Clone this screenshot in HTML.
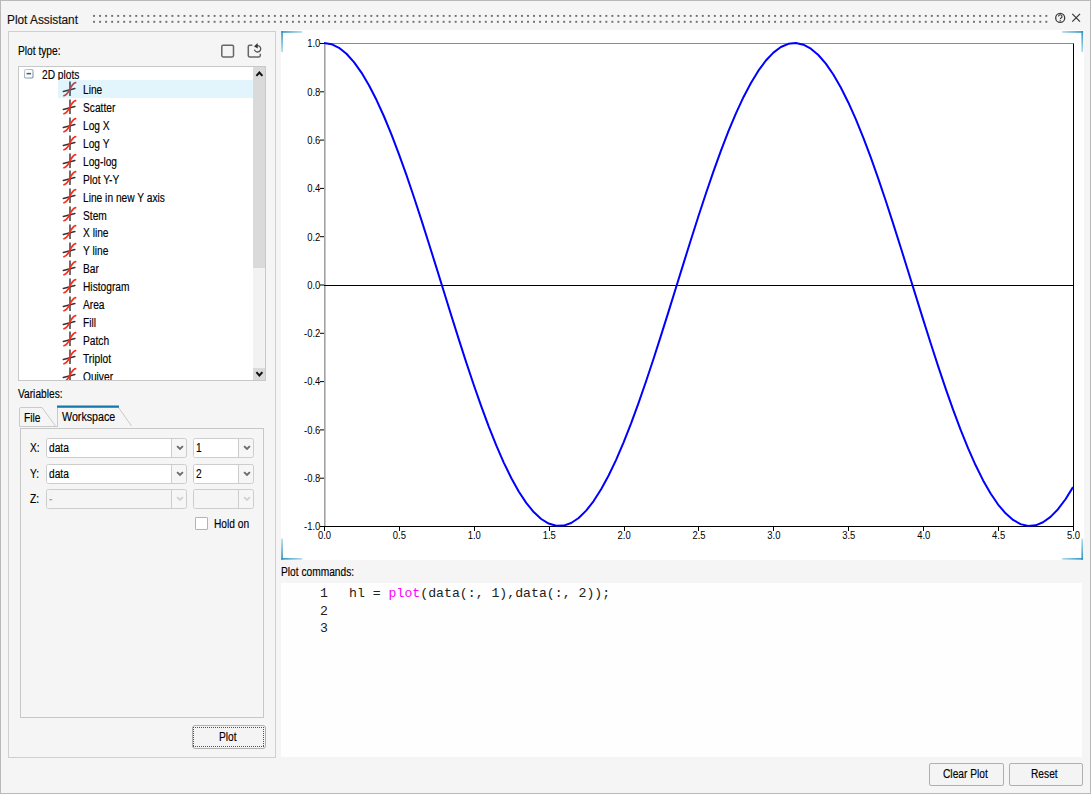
<!DOCTYPE html>
<html><head><meta charset="utf-8"><style>
*{margin:0;padding:0;box-sizing:border-box}
html,body{width:1091px;height:794px;overflow:hidden;background:#f5f5f5}
body{position:relative;font-family:"Liberation Sans",sans-serif;color:#000}
.abs{position:absolute}
.t{position:absolute;white-space:nowrap;line-height:1;transform-origin:0 0;-webkit-text-stroke:0.15px currentColor}
</style></head><body>

<div class="abs" style="left:0;top:0;width:1091px;height:794px;border:1px solid #b9b9b9"></div>
<div class="t" style="left:7px;top:14.04px;font-size:12px;color:#111;transform:scaleX(0.985);">Plot Assistant</div>
<svg class="abs" style="left:0;top:0" width="1091" height="40">
<g fill="#6e6e6e"><rect x="93.10" y="14.95" width="1.9" height="1.9"/><rect x="93.10" y="20.85" width="1.9" height="1.9"/><rect x="99.13" y="14.95" width="1.9" height="1.9"/><rect x="99.13" y="20.85" width="1.9" height="1.9"/><rect x="105.15" y="14.95" width="1.9" height="1.9"/><rect x="105.15" y="20.85" width="1.9" height="1.9"/><rect x="111.18" y="14.95" width="1.9" height="1.9"/><rect x="111.18" y="20.85" width="1.9" height="1.9"/><rect x="117.21" y="14.95" width="1.9" height="1.9"/><rect x="117.21" y="20.85" width="1.9" height="1.9"/><rect x="123.23" y="14.95" width="1.9" height="1.9"/><rect x="123.23" y="20.85" width="1.9" height="1.9"/><rect x="129.26" y="14.95" width="1.9" height="1.9"/><rect x="129.26" y="20.85" width="1.9" height="1.9"/><rect x="135.29" y="14.95" width="1.9" height="1.9"/><rect x="135.29" y="20.85" width="1.9" height="1.9"/><rect x="141.32" y="14.95" width="1.9" height="1.9"/><rect x="141.32" y="20.85" width="1.9" height="1.9"/><rect x="147.34" y="14.95" width="1.9" height="1.9"/><rect x="147.34" y="20.85" width="1.9" height="1.9"/><rect x="153.37" y="14.95" width="1.9" height="1.9"/><rect x="153.37" y="20.85" width="1.9" height="1.9"/><rect x="159.40" y="14.95" width="1.9" height="1.9"/><rect x="159.40" y="20.85" width="1.9" height="1.9"/><rect x="165.42" y="14.95" width="1.9" height="1.9"/><rect x="165.42" y="20.85" width="1.9" height="1.9"/><rect x="171.45" y="14.95" width="1.9" height="1.9"/><rect x="171.45" y="20.85" width="1.9" height="1.9"/><rect x="177.48" y="14.95" width="1.9" height="1.9"/><rect x="177.48" y="20.85" width="1.9" height="1.9"/><rect x="183.50" y="14.95" width="1.9" height="1.9"/><rect x="183.50" y="20.85" width="1.9" height="1.9"/><rect x="189.53" y="14.95" width="1.9" height="1.9"/><rect x="189.53" y="20.85" width="1.9" height="1.9"/><rect x="195.56" y="14.95" width="1.9" height="1.9"/><rect x="195.56" y="20.85" width="1.9" height="1.9"/><rect x="201.59" y="14.95" width="1.9" height="1.9"/><rect x="201.59" y="20.85" width="1.9" height="1.9"/><rect x="207.61" y="14.95" width="1.9" height="1.9"/><rect x="207.61" y="20.85" width="1.9" height="1.9"/><rect x="213.64" y="14.95" width="1.9" height="1.9"/><rect x="213.64" y="20.85" width="1.9" height="1.9"/><rect x="219.67" y="14.95" width="1.9" height="1.9"/><rect x="219.67" y="20.85" width="1.9" height="1.9"/><rect x="225.69" y="14.95" width="1.9" height="1.9"/><rect x="225.69" y="20.85" width="1.9" height="1.9"/><rect x="231.72" y="14.95" width="1.9" height="1.9"/><rect x="231.72" y="20.85" width="1.9" height="1.9"/><rect x="237.75" y="14.95" width="1.9" height="1.9"/><rect x="237.75" y="20.85" width="1.9" height="1.9"/><rect x="243.78" y="14.95" width="1.9" height="1.9"/><rect x="243.78" y="20.85" width="1.9" height="1.9"/><rect x="249.80" y="14.95" width="1.9" height="1.9"/><rect x="249.80" y="20.85" width="1.9" height="1.9"/><rect x="255.83" y="14.95" width="1.9" height="1.9"/><rect x="255.83" y="20.85" width="1.9" height="1.9"/><rect x="261.86" y="14.95" width="1.9" height="1.9"/><rect x="261.86" y="20.85" width="1.9" height="1.9"/><rect x="267.88" y="14.95" width="1.9" height="1.9"/><rect x="267.88" y="20.85" width="1.9" height="1.9"/><rect x="273.91" y="14.95" width="1.9" height="1.9"/><rect x="273.91" y="20.85" width="1.9" height="1.9"/><rect x="279.94" y="14.95" width="1.9" height="1.9"/><rect x="279.94" y="20.85" width="1.9" height="1.9"/><rect x="285.96" y="14.95" width="1.9" height="1.9"/><rect x="285.96" y="20.85" width="1.9" height="1.9"/><rect x="291.99" y="14.95" width="1.9" height="1.9"/><rect x="291.99" y="20.85" width="1.9" height="1.9"/><rect x="298.02" y="14.95" width="1.9" height="1.9"/><rect x="298.02" y="20.85" width="1.9" height="1.9"/><rect x="304.05" y="14.95" width="1.9" height="1.9"/><rect x="304.05" y="20.85" width="1.9" height="1.9"/><rect x="310.07" y="14.95" width="1.9" height="1.9"/><rect x="310.07" y="20.85" width="1.9" height="1.9"/><rect x="316.10" y="14.95" width="1.9" height="1.9"/><rect x="316.10" y="20.85" width="1.9" height="1.9"/><rect x="322.13" y="14.95" width="1.9" height="1.9"/><rect x="322.13" y="20.85" width="1.9" height="1.9"/><rect x="328.15" y="14.95" width="1.9" height="1.9"/><rect x="328.15" y="20.85" width="1.9" height="1.9"/><rect x="334.18" y="14.95" width="1.9" height="1.9"/><rect x="334.18" y="20.85" width="1.9" height="1.9"/><rect x="340.21" y="14.95" width="1.9" height="1.9"/><rect x="340.21" y="20.85" width="1.9" height="1.9"/><rect x="346.23" y="14.95" width="1.9" height="1.9"/><rect x="346.23" y="20.85" width="1.9" height="1.9"/><rect x="352.26" y="14.95" width="1.9" height="1.9"/><rect x="352.26" y="20.85" width="1.9" height="1.9"/><rect x="358.29" y="14.95" width="1.9" height="1.9"/><rect x="358.29" y="20.85" width="1.9" height="1.9"/><rect x="364.32" y="14.95" width="1.9" height="1.9"/><rect x="364.32" y="20.85" width="1.9" height="1.9"/><rect x="370.34" y="14.95" width="1.9" height="1.9"/><rect x="370.34" y="20.85" width="1.9" height="1.9"/><rect x="376.37" y="14.95" width="1.9" height="1.9"/><rect x="376.37" y="20.85" width="1.9" height="1.9"/><rect x="382.40" y="14.95" width="1.9" height="1.9"/><rect x="382.40" y="20.85" width="1.9" height="1.9"/><rect x="388.42" y="14.95" width="1.9" height="1.9"/><rect x="388.42" y="20.85" width="1.9" height="1.9"/><rect x="394.45" y="14.95" width="1.9" height="1.9"/><rect x="394.45" y="20.85" width="1.9" height="1.9"/><rect x="400.48" y="14.95" width="1.9" height="1.9"/><rect x="400.48" y="20.85" width="1.9" height="1.9"/><rect x="406.50" y="14.95" width="1.9" height="1.9"/><rect x="406.50" y="20.85" width="1.9" height="1.9"/><rect x="412.53" y="14.95" width="1.9" height="1.9"/><rect x="412.53" y="20.85" width="1.9" height="1.9"/><rect x="418.56" y="14.95" width="1.9" height="1.9"/><rect x="418.56" y="20.85" width="1.9" height="1.9"/><rect x="424.59" y="14.95" width="1.9" height="1.9"/><rect x="424.59" y="20.85" width="1.9" height="1.9"/><rect x="430.61" y="14.95" width="1.9" height="1.9"/><rect x="430.61" y="20.85" width="1.9" height="1.9"/><rect x="436.64" y="14.95" width="1.9" height="1.9"/><rect x="436.64" y="20.85" width="1.9" height="1.9"/><rect x="442.67" y="14.95" width="1.9" height="1.9"/><rect x="442.67" y="20.85" width="1.9" height="1.9"/><rect x="448.69" y="14.95" width="1.9" height="1.9"/><rect x="448.69" y="20.85" width="1.9" height="1.9"/><rect x="454.72" y="14.95" width="1.9" height="1.9"/><rect x="454.72" y="20.85" width="1.9" height="1.9"/><rect x="460.75" y="14.95" width="1.9" height="1.9"/><rect x="460.75" y="20.85" width="1.9" height="1.9"/><rect x="466.77" y="14.95" width="1.9" height="1.9"/><rect x="466.77" y="20.85" width="1.9" height="1.9"/><rect x="472.80" y="14.95" width="1.9" height="1.9"/><rect x="472.80" y="20.85" width="1.9" height="1.9"/><rect x="478.83" y="14.95" width="1.9" height="1.9"/><rect x="478.83" y="20.85" width="1.9" height="1.9"/><rect x="484.86" y="14.95" width="1.9" height="1.9"/><rect x="484.86" y="20.85" width="1.9" height="1.9"/><rect x="490.88" y="14.95" width="1.9" height="1.9"/><rect x="490.88" y="20.85" width="1.9" height="1.9"/><rect x="496.91" y="14.95" width="1.9" height="1.9"/><rect x="496.91" y="20.85" width="1.9" height="1.9"/><rect x="502.94" y="14.95" width="1.9" height="1.9"/><rect x="502.94" y="20.85" width="1.9" height="1.9"/><rect x="508.96" y="14.95" width="1.9" height="1.9"/><rect x="508.96" y="20.85" width="1.9" height="1.9"/><rect x="514.99" y="14.95" width="1.9" height="1.9"/><rect x="514.99" y="20.85" width="1.9" height="1.9"/><rect x="521.02" y="14.95" width="1.9" height="1.9"/><rect x="521.02" y="20.85" width="1.9" height="1.9"/><rect x="527.04" y="14.95" width="1.9" height="1.9"/><rect x="527.04" y="20.85" width="1.9" height="1.9"/><rect x="533.07" y="14.95" width="1.9" height="1.9"/><rect x="533.07" y="20.85" width="1.9" height="1.9"/><rect x="539.10" y="14.95" width="1.9" height="1.9"/><rect x="539.10" y="20.85" width="1.9" height="1.9"/><rect x="545.12" y="14.95" width="1.9" height="1.9"/><rect x="545.12" y="20.85" width="1.9" height="1.9"/><rect x="551.15" y="14.95" width="1.9" height="1.9"/><rect x="551.15" y="20.85" width="1.9" height="1.9"/><rect x="557.18" y="14.95" width="1.9" height="1.9"/><rect x="557.18" y="20.85" width="1.9" height="1.9"/><rect x="563.21" y="14.95" width="1.9" height="1.9"/><rect x="563.21" y="20.85" width="1.9" height="1.9"/><rect x="569.23" y="14.95" width="1.9" height="1.9"/><rect x="569.23" y="20.85" width="1.9" height="1.9"/><rect x="575.26" y="14.95" width="1.9" height="1.9"/><rect x="575.26" y="20.85" width="1.9" height="1.9"/><rect x="581.29" y="14.95" width="1.9" height="1.9"/><rect x="581.29" y="20.85" width="1.9" height="1.9"/><rect x="587.31" y="14.95" width="1.9" height="1.9"/><rect x="587.31" y="20.85" width="1.9" height="1.9"/><rect x="593.34" y="14.95" width="1.9" height="1.9"/><rect x="593.34" y="20.85" width="1.9" height="1.9"/><rect x="599.37" y="14.95" width="1.9" height="1.9"/><rect x="599.37" y="20.85" width="1.9" height="1.9"/><rect x="605.39" y="14.95" width="1.9" height="1.9"/><rect x="605.39" y="20.85" width="1.9" height="1.9"/><rect x="611.42" y="14.95" width="1.9" height="1.9"/><rect x="611.42" y="20.85" width="1.9" height="1.9"/><rect x="617.45" y="14.95" width="1.9" height="1.9"/><rect x="617.45" y="20.85" width="1.9" height="1.9"/><rect x="623.48" y="14.95" width="1.9" height="1.9"/><rect x="623.48" y="20.85" width="1.9" height="1.9"/><rect x="629.50" y="14.95" width="1.9" height="1.9"/><rect x="629.50" y="20.85" width="1.9" height="1.9"/><rect x="635.53" y="14.95" width="1.9" height="1.9"/><rect x="635.53" y="20.85" width="1.9" height="1.9"/><rect x="641.56" y="14.95" width="1.9" height="1.9"/><rect x="641.56" y="20.85" width="1.9" height="1.9"/><rect x="647.58" y="14.95" width="1.9" height="1.9"/><rect x="647.58" y="20.85" width="1.9" height="1.9"/><rect x="653.61" y="14.95" width="1.9" height="1.9"/><rect x="653.61" y="20.85" width="1.9" height="1.9"/><rect x="659.64" y="14.95" width="1.9" height="1.9"/><rect x="659.64" y="20.85" width="1.9" height="1.9"/><rect x="665.66" y="14.95" width="1.9" height="1.9"/><rect x="665.66" y="20.85" width="1.9" height="1.9"/><rect x="671.69" y="14.95" width="1.9" height="1.9"/><rect x="671.69" y="20.85" width="1.9" height="1.9"/><rect x="677.72" y="14.95" width="1.9" height="1.9"/><rect x="677.72" y="20.85" width="1.9" height="1.9"/><rect x="683.75" y="14.95" width="1.9" height="1.9"/><rect x="683.75" y="20.85" width="1.9" height="1.9"/><rect x="689.77" y="14.95" width="1.9" height="1.9"/><rect x="689.77" y="20.85" width="1.9" height="1.9"/><rect x="695.80" y="14.95" width="1.9" height="1.9"/><rect x="695.80" y="20.85" width="1.9" height="1.9"/><rect x="701.83" y="14.95" width="1.9" height="1.9"/><rect x="701.83" y="20.85" width="1.9" height="1.9"/><rect x="707.85" y="14.95" width="1.9" height="1.9"/><rect x="707.85" y="20.85" width="1.9" height="1.9"/><rect x="713.88" y="14.95" width="1.9" height="1.9"/><rect x="713.88" y="20.85" width="1.9" height="1.9"/><rect x="719.91" y="14.95" width="1.9" height="1.9"/><rect x="719.91" y="20.85" width="1.9" height="1.9"/><rect x="725.93" y="14.95" width="1.9" height="1.9"/><rect x="725.93" y="20.85" width="1.9" height="1.9"/><rect x="731.96" y="14.95" width="1.9" height="1.9"/><rect x="731.96" y="20.85" width="1.9" height="1.9"/><rect x="737.99" y="14.95" width="1.9" height="1.9"/><rect x="737.99" y="20.85" width="1.9" height="1.9"/><rect x="744.02" y="14.95" width="1.9" height="1.9"/><rect x="744.02" y="20.85" width="1.9" height="1.9"/><rect x="750.04" y="14.95" width="1.9" height="1.9"/><rect x="750.04" y="20.85" width="1.9" height="1.9"/><rect x="756.07" y="14.95" width="1.9" height="1.9"/><rect x="756.07" y="20.85" width="1.9" height="1.9"/><rect x="762.10" y="14.95" width="1.9" height="1.9"/><rect x="762.10" y="20.85" width="1.9" height="1.9"/><rect x="768.12" y="14.95" width="1.9" height="1.9"/><rect x="768.12" y="20.85" width="1.9" height="1.9"/><rect x="774.15" y="14.95" width="1.9" height="1.9"/><rect x="774.15" y="20.85" width="1.9" height="1.9"/><rect x="780.18" y="14.95" width="1.9" height="1.9"/><rect x="780.18" y="20.85" width="1.9" height="1.9"/><rect x="786.20" y="14.95" width="1.9" height="1.9"/><rect x="786.20" y="20.85" width="1.9" height="1.9"/><rect x="792.23" y="14.95" width="1.9" height="1.9"/><rect x="792.23" y="20.85" width="1.9" height="1.9"/><rect x="798.26" y="14.95" width="1.9" height="1.9"/><rect x="798.26" y="20.85" width="1.9" height="1.9"/><rect x="804.29" y="14.95" width="1.9" height="1.9"/><rect x="804.29" y="20.85" width="1.9" height="1.9"/><rect x="810.31" y="14.95" width="1.9" height="1.9"/><rect x="810.31" y="20.85" width="1.9" height="1.9"/><rect x="816.34" y="14.95" width="1.9" height="1.9"/><rect x="816.34" y="20.85" width="1.9" height="1.9"/><rect x="822.37" y="14.95" width="1.9" height="1.9"/><rect x="822.37" y="20.85" width="1.9" height="1.9"/><rect x="828.39" y="14.95" width="1.9" height="1.9"/><rect x="828.39" y="20.85" width="1.9" height="1.9"/><rect x="834.42" y="14.95" width="1.9" height="1.9"/><rect x="834.42" y="20.85" width="1.9" height="1.9"/><rect x="840.45" y="14.95" width="1.9" height="1.9"/><rect x="840.45" y="20.85" width="1.9" height="1.9"/><rect x="846.47" y="14.95" width="1.9" height="1.9"/><rect x="846.47" y="20.85" width="1.9" height="1.9"/><rect x="852.50" y="14.95" width="1.9" height="1.9"/><rect x="852.50" y="20.85" width="1.9" height="1.9"/><rect x="858.53" y="14.95" width="1.9" height="1.9"/><rect x="858.53" y="20.85" width="1.9" height="1.9"/><rect x="864.56" y="14.95" width="1.9" height="1.9"/><rect x="864.56" y="20.85" width="1.9" height="1.9"/><rect x="870.58" y="14.95" width="1.9" height="1.9"/><rect x="870.58" y="20.85" width="1.9" height="1.9"/><rect x="876.61" y="14.95" width="1.9" height="1.9"/><rect x="876.61" y="20.85" width="1.9" height="1.9"/><rect x="882.64" y="14.95" width="1.9" height="1.9"/><rect x="882.64" y="20.85" width="1.9" height="1.9"/><rect x="888.66" y="14.95" width="1.9" height="1.9"/><rect x="888.66" y="20.85" width="1.9" height="1.9"/><rect x="894.69" y="14.95" width="1.9" height="1.9"/><rect x="894.69" y="20.85" width="1.9" height="1.9"/><rect x="900.72" y="14.95" width="1.9" height="1.9"/><rect x="900.72" y="20.85" width="1.9" height="1.9"/><rect x="906.74" y="14.95" width="1.9" height="1.9"/><rect x="906.74" y="20.85" width="1.9" height="1.9"/><rect x="912.77" y="14.95" width="1.9" height="1.9"/><rect x="912.77" y="20.85" width="1.9" height="1.9"/><rect x="918.80" y="14.95" width="1.9" height="1.9"/><rect x="918.80" y="20.85" width="1.9" height="1.9"/><rect x="924.83" y="14.95" width="1.9" height="1.9"/><rect x="924.83" y="20.85" width="1.9" height="1.9"/><rect x="930.85" y="14.95" width="1.9" height="1.9"/><rect x="930.85" y="20.85" width="1.9" height="1.9"/><rect x="936.88" y="14.95" width="1.9" height="1.9"/><rect x="936.88" y="20.85" width="1.9" height="1.9"/><rect x="942.91" y="14.95" width="1.9" height="1.9"/><rect x="942.91" y="20.85" width="1.9" height="1.9"/><rect x="948.93" y="14.95" width="1.9" height="1.9"/><rect x="948.93" y="20.85" width="1.9" height="1.9"/><rect x="954.96" y="14.95" width="1.9" height="1.9"/><rect x="954.96" y="20.85" width="1.9" height="1.9"/><rect x="960.99" y="14.95" width="1.9" height="1.9"/><rect x="960.99" y="20.85" width="1.9" height="1.9"/><rect x="967.01" y="14.95" width="1.9" height="1.9"/><rect x="967.01" y="20.85" width="1.9" height="1.9"/><rect x="973.04" y="14.95" width="1.9" height="1.9"/><rect x="973.04" y="20.85" width="1.9" height="1.9"/><rect x="979.07" y="14.95" width="1.9" height="1.9"/><rect x="979.07" y="20.85" width="1.9" height="1.9"/><rect x="985.10" y="14.95" width="1.9" height="1.9"/><rect x="985.10" y="20.85" width="1.9" height="1.9"/><rect x="991.12" y="14.95" width="1.9" height="1.9"/><rect x="991.12" y="20.85" width="1.9" height="1.9"/><rect x="997.15" y="14.95" width="1.9" height="1.9"/><rect x="997.15" y="20.85" width="1.9" height="1.9"/><rect x="1003.18" y="14.95" width="1.9" height="1.9"/><rect x="1003.18" y="20.85" width="1.9" height="1.9"/><rect x="1009.20" y="14.95" width="1.9" height="1.9"/><rect x="1009.20" y="20.85" width="1.9" height="1.9"/><rect x="1015.23" y="14.95" width="1.9" height="1.9"/><rect x="1015.23" y="20.85" width="1.9" height="1.9"/><rect x="1021.26" y="14.95" width="1.9" height="1.9"/><rect x="1021.26" y="20.85" width="1.9" height="1.9"/><rect x="1027.29" y="14.95" width="1.9" height="1.9"/><rect x="1027.29" y="20.85" width="1.9" height="1.9"/><rect x="1033.31" y="14.95" width="1.9" height="1.9"/><rect x="1033.31" y="20.85" width="1.9" height="1.9"/><rect x="1039.34" y="14.95" width="1.9" height="1.9"/><rect x="1039.34" y="20.85" width="1.9" height="1.9"/><rect x="1045.37" y="14.95" width="1.9" height="1.9"/><rect x="1045.37" y="20.85" width="1.9" height="1.9"/></g>
<circle cx="1060.2" cy="17.9" r="4.5" fill="none" stroke="#3c3c3c" stroke-width="1.3"/>
<path d="M1058.5,16.5 a1.75,1.75 0 1 1 2.6,1.5 c-0.6,0.35 -0.85,0.7 -0.85,1.3" fill="none" stroke="#3c3c3c" stroke-width="1.15"/><circle cx="1060.25" cy="20.75" r="0.7" fill="#3c3c3c"/>
<path d="M1072.3,13.9 L1080,21.6 M1080,13.9 L1072.3,21.6" stroke="#333" stroke-width="1.2"/>
</svg>
<div class="abs" style="left:8px;top:31px;width:268px;height:727px;border:1px solid #cfcfcf"></div>
<div class="t" style="left:17.5px;top:44.84px;font-size:12px;color:#000;transform:scaleX(0.85);">Plot type:</div>
<svg class="abs" style="left:215px;top:38px" width="55" height="26">
<rect x="6.8" y="7.2" width="11.7" height="11.7" rx="1.3" fill="none" stroke="#666" stroke-width="1.5"/>
<path d="M37.4,7.2 H34.6 a1.3,1.3 0 0 0 -1.3,1.3 V17.6 a1.3,1.3 0 0 0 1.3,1.3 H44 a1.3,1.3 0 0 0 1.3,-1.3 V15.8" fill="none" stroke="#666" stroke-width="1.5"/>
<path d="M39.4,11.6 A3.2,3.2 0 1 0 41.6,7.7" fill="none" stroke="#555" stroke-width="1.3"/><path d="M39.0,8.4 L42.6,5.0 L42.8,10.4 Z" fill="#333"/>
</svg>
<div class="abs" style="left:18px;top:66px;width:248px;height:315px;border:1px solid #c8c8c8;background:#fff"></div>
<div class="abs" style="left:253px;top:67px;width:12px;height:313px;background:#f2f2f2"></div>
<div class="abs" style="left:253px;top:67px;width:12px;height:201px;background:#dadada"></div>
<div class="abs" style="left:253px;top:368px;width:12px;height:12px;background:#dadada"></div>
<svg class="abs" style="left:253px;top:67px" width="12" height="313">
<path d="M3.4,8.9 L6.4,5.6 L9.4,8.9" fill="none" stroke="#111" stroke-width="2"/>
<path d="M3.4,305.1 L6.4,308.4 L9.4,305.1" fill="none" stroke="#111" stroke-width="2"/>
</svg>
<svg class="abs" style="left:21.5px;top:67.3px" width="14" height="14"><defs><linearGradient id="mgs" x1="0" y1="0" x2="1" y2="1"><stop offset="0" stop-color="#c9cfe0"/><stop offset="1" stop-color="#6f8aa6"/></linearGradient></defs><rect x="2.5" y="2.5" width="8.5" height="8.5" rx="1.2" fill="#fbfcfe" stroke="url(#mgs)" stroke-width="1.1"/><rect x="4.6" y="5.9" width="4.4" height="1.5" fill="#555"/></svg>
<div class="t" style="left:41.8px;top:68.74px;font-size:12px;color:#000;transform:scaleX(0.85);">2D plots</div>
<div class="abs" style="left:58px;top:80px;width:195px;height:18px;background:#e3f5fc"></div>
<div class="abs" style="left:19px;top:67px;width:234px;height:313px;overflow:hidden">
<svg class="abs" style="left:43px;top:13.00px" width="16" height="18"><line x1="8" y1="1.4" x2="8" y2="16" stroke="#4d6470" stroke-width="1.8"/><line x1="1.3" y1="11.4" x2="12.9" y2="8.4" stroke="#2d3f4a" stroke-width="1.5" stroke-linecap="round"/><path d="M1.9,15.7 C4.7,14.8 6.3,12.5 7.7,9.6 C9.1,6.5 10.5,3.3 13.6,2.6" fill="none" stroke="#b5474f" stroke-width="1.7" stroke-linecap="round"/></svg>
<div class="t" style="left:64.3px;top:17.34px;font-size:12px;color:#000;transform:scaleX(0.85);">Line</div>
<svg class="abs" style="left:43px;top:30.89px" width="16" height="18"><line x1="8" y1="1.4" x2="8" y2="16" stroke="#5e5e5e" stroke-width="1.8"/><line x1="1.3" y1="11.4" x2="12.9" y2="8.4" stroke="#333" stroke-width="1.5" stroke-linecap="round"/><path d="M1.9,15.7 C4.7,14.8 6.3,12.5 7.7,9.6 C9.1,6.5 10.5,3.3 13.6,2.6" fill="none" stroke="#ff2a1a" stroke-width="1.7" stroke-linecap="round"/></svg>
<div class="t" style="left:64.3px;top:35.23px;font-size:12px;color:#000;transform:scaleX(0.85);">Scatter</div>
<svg class="abs" style="left:43px;top:48.77px" width="16" height="18"><line x1="8" y1="1.4" x2="8" y2="16" stroke="#5e5e5e" stroke-width="1.8"/><line x1="1.3" y1="11.4" x2="12.9" y2="8.4" stroke="#333" stroke-width="1.5" stroke-linecap="round"/><path d="M1.9,15.7 C4.7,14.8 6.3,12.5 7.7,9.6 C9.1,6.5 10.5,3.3 13.6,2.6" fill="none" stroke="#ff2a1a" stroke-width="1.7" stroke-linecap="round"/></svg>
<div class="t" style="left:64.3px;top:53.11px;font-size:12px;color:#000;transform:scaleX(0.85);">Log X</div>
<svg class="abs" style="left:43px;top:66.66px" width="16" height="18"><line x1="8" y1="1.4" x2="8" y2="16" stroke="#5e5e5e" stroke-width="1.8"/><line x1="1.3" y1="11.4" x2="12.9" y2="8.4" stroke="#333" stroke-width="1.5" stroke-linecap="round"/><path d="M1.9,15.7 C4.7,14.8 6.3,12.5 7.7,9.6 C9.1,6.5 10.5,3.3 13.6,2.6" fill="none" stroke="#ff2a1a" stroke-width="1.7" stroke-linecap="round"/></svg>
<div class="t" style="left:64.3px;top:71.00px;font-size:12px;color:#000;transform:scaleX(0.85);">Log Y</div>
<svg class="abs" style="left:43px;top:84.54px" width="16" height="18"><line x1="8" y1="1.4" x2="8" y2="16" stroke="#5e5e5e" stroke-width="1.8"/><line x1="1.3" y1="11.4" x2="12.9" y2="8.4" stroke="#333" stroke-width="1.5" stroke-linecap="round"/><path d="M1.9,15.7 C4.7,14.8 6.3,12.5 7.7,9.6 C9.1,6.5 10.5,3.3 13.6,2.6" fill="none" stroke="#ff2a1a" stroke-width="1.7" stroke-linecap="round"/></svg>
<div class="t" style="left:64.3px;top:88.89px;font-size:12px;color:#000;transform:scaleX(0.85);">Log-log</div>
<svg class="abs" style="left:43px;top:102.43px" width="16" height="18"><line x1="8" y1="1.4" x2="8" y2="16" stroke="#5e5e5e" stroke-width="1.8"/><line x1="1.3" y1="11.4" x2="12.9" y2="8.4" stroke="#333" stroke-width="1.5" stroke-linecap="round"/><path d="M1.9,15.7 C4.7,14.8 6.3,12.5 7.7,9.6 C9.1,6.5 10.5,3.3 13.6,2.6" fill="none" stroke="#ff2a1a" stroke-width="1.7" stroke-linecap="round"/></svg>
<div class="t" style="left:64.3px;top:106.77px;font-size:12px;color:#000;transform:scaleX(0.85);">Plot Y-Y</div>
<svg class="abs" style="left:43px;top:120.32px" width="16" height="18"><line x1="8" y1="1.4" x2="8" y2="16" stroke="#5e5e5e" stroke-width="1.8"/><line x1="1.3" y1="11.4" x2="12.9" y2="8.4" stroke="#333" stroke-width="1.5" stroke-linecap="round"/><path d="M1.9,15.7 C4.7,14.8 6.3,12.5 7.7,9.6 C9.1,6.5 10.5,3.3 13.6,2.6" fill="none" stroke="#ff2a1a" stroke-width="1.7" stroke-linecap="round"/></svg>
<div class="t" style="left:64.3px;top:124.66px;font-size:12px;color:#000;transform:scaleX(0.85);">Line in new Y axis</div>
<svg class="abs" style="left:43px;top:138.20px" width="16" height="18"><line x1="8" y1="1.4" x2="8" y2="16" stroke="#5e5e5e" stroke-width="1.8"/><line x1="1.3" y1="11.4" x2="12.9" y2="8.4" stroke="#333" stroke-width="1.5" stroke-linecap="round"/><path d="M1.9,15.7 C4.7,14.8 6.3,12.5 7.7,9.6 C9.1,6.5 10.5,3.3 13.6,2.6" fill="none" stroke="#ff2a1a" stroke-width="1.7" stroke-linecap="round"/></svg>
<div class="t" style="left:64.3px;top:142.54px;font-size:12px;color:#000;transform:scaleX(0.85);">Stem</div>
<svg class="abs" style="left:43px;top:156.09px" width="16" height="18"><line x1="8" y1="1.4" x2="8" y2="16" stroke="#5e5e5e" stroke-width="1.8"/><line x1="1.3" y1="11.4" x2="12.9" y2="8.4" stroke="#333" stroke-width="1.5" stroke-linecap="round"/><path d="M1.9,15.7 C4.7,14.8 6.3,12.5 7.7,9.6 C9.1,6.5 10.5,3.3 13.6,2.6" fill="none" stroke="#ff2a1a" stroke-width="1.7" stroke-linecap="round"/></svg>
<div class="t" style="left:64.3px;top:160.43px;font-size:12px;color:#000;transform:scaleX(0.85);">X line</div>
<svg class="abs" style="left:43px;top:173.97px" width="16" height="18"><line x1="8" y1="1.4" x2="8" y2="16" stroke="#5e5e5e" stroke-width="1.8"/><line x1="1.3" y1="11.4" x2="12.9" y2="8.4" stroke="#333" stroke-width="1.5" stroke-linecap="round"/><path d="M1.9,15.7 C4.7,14.8 6.3,12.5 7.7,9.6 C9.1,6.5 10.5,3.3 13.6,2.6" fill="none" stroke="#ff2a1a" stroke-width="1.7" stroke-linecap="round"/></svg>
<div class="t" style="left:64.3px;top:178.32px;font-size:12px;color:#000;transform:scaleX(0.85);">Y line</div>
<svg class="abs" style="left:43px;top:191.86px" width="16" height="18"><line x1="8" y1="1.4" x2="8" y2="16" stroke="#5e5e5e" stroke-width="1.8"/><line x1="1.3" y1="11.4" x2="12.9" y2="8.4" stroke="#333" stroke-width="1.5" stroke-linecap="round"/><path d="M1.9,15.7 C4.7,14.8 6.3,12.5 7.7,9.6 C9.1,6.5 10.5,3.3 13.6,2.6" fill="none" stroke="#ff2a1a" stroke-width="1.7" stroke-linecap="round"/></svg>
<div class="t" style="left:64.3px;top:196.20px;font-size:12px;color:#000;transform:scaleX(0.85);">Bar</div>
<svg class="abs" style="left:43px;top:209.75px" width="16" height="18"><line x1="8" y1="1.4" x2="8" y2="16" stroke="#5e5e5e" stroke-width="1.8"/><line x1="1.3" y1="11.4" x2="12.9" y2="8.4" stroke="#333" stroke-width="1.5" stroke-linecap="round"/><path d="M1.9,15.7 C4.7,14.8 6.3,12.5 7.7,9.6 C9.1,6.5 10.5,3.3 13.6,2.6" fill="none" stroke="#ff2a1a" stroke-width="1.7" stroke-linecap="round"/></svg>
<div class="t" style="left:64.3px;top:214.09px;font-size:12px;color:#000;transform:scaleX(0.85);">Histogram</div>
<svg class="abs" style="left:43px;top:227.63px" width="16" height="18"><line x1="8" y1="1.4" x2="8" y2="16" stroke="#5e5e5e" stroke-width="1.8"/><line x1="1.3" y1="11.4" x2="12.9" y2="8.4" stroke="#333" stroke-width="1.5" stroke-linecap="round"/><path d="M1.9,15.7 C4.7,14.8 6.3,12.5 7.7,9.6 C9.1,6.5 10.5,3.3 13.6,2.6" fill="none" stroke="#ff2a1a" stroke-width="1.7" stroke-linecap="round"/></svg>
<div class="t" style="left:64.3px;top:231.97px;font-size:12px;color:#000;transform:scaleX(0.85);">Area</div>
<svg class="abs" style="left:43px;top:245.52px" width="16" height="18"><line x1="8" y1="1.4" x2="8" y2="16" stroke="#5e5e5e" stroke-width="1.8"/><line x1="1.3" y1="11.4" x2="12.9" y2="8.4" stroke="#333" stroke-width="1.5" stroke-linecap="round"/><path d="M1.9,15.7 C4.7,14.8 6.3,12.5 7.7,9.6 C9.1,6.5 10.5,3.3 13.6,2.6" fill="none" stroke="#ff2a1a" stroke-width="1.7" stroke-linecap="round"/></svg>
<div class="t" style="left:64.3px;top:249.86px;font-size:12px;color:#000;transform:scaleX(0.85);">Fill</div>
<svg class="abs" style="left:43px;top:263.40px" width="16" height="18"><line x1="8" y1="1.4" x2="8" y2="16" stroke="#5e5e5e" stroke-width="1.8"/><line x1="1.3" y1="11.4" x2="12.9" y2="8.4" stroke="#333" stroke-width="1.5" stroke-linecap="round"/><path d="M1.9,15.7 C4.7,14.8 6.3,12.5 7.7,9.6 C9.1,6.5 10.5,3.3 13.6,2.6" fill="none" stroke="#ff2a1a" stroke-width="1.7" stroke-linecap="round"/></svg>
<div class="t" style="left:64.3px;top:267.75px;font-size:12px;color:#000;transform:scaleX(0.85);">Patch</div>
<svg class="abs" style="left:43px;top:281.29px" width="16" height="18"><line x1="8" y1="1.4" x2="8" y2="16" stroke="#5e5e5e" stroke-width="1.8"/><line x1="1.3" y1="11.4" x2="12.9" y2="8.4" stroke="#333" stroke-width="1.5" stroke-linecap="round"/><path d="M1.9,15.7 C4.7,14.8 6.3,12.5 7.7,9.6 C9.1,6.5 10.5,3.3 13.6,2.6" fill="none" stroke="#ff2a1a" stroke-width="1.7" stroke-linecap="round"/></svg>
<div class="t" style="left:64.3px;top:285.63px;font-size:12px;color:#000;transform:scaleX(0.85);">Triplot</div>
<svg class="abs" style="left:43px;top:299.18px" width="16" height="18"><line x1="8" y1="1.4" x2="8" y2="16" stroke="#5e5e5e" stroke-width="1.8"/><line x1="1.3" y1="11.4" x2="12.9" y2="8.4" stroke="#333" stroke-width="1.5" stroke-linecap="round"/><path d="M1.9,15.7 C4.7,14.8 6.3,12.5 7.7,9.6 C9.1,6.5 10.5,3.3 13.6,2.6" fill="none" stroke="#ff2a1a" stroke-width="1.7" stroke-linecap="round"/></svg>
<div class="t" style="left:64.3px;top:303.52px;font-size:12px;color:#000;transform:scaleX(0.85);">Quiver</div>
</div>
<div class="t" style="left:17.8px;top:388.14px;font-size:12px;color:#000;transform:scaleX(0.85);">Variables:</div>
<div class="abs" style="left:20px;top:428px;width:244px;height:290px;border:1px solid #c8c8c8"></div>
<svg class="abs" style="left:15px;top:400px" width="130" height="30">
<path d="M4.5,26.5 V9 Q4.5,7.5 6,7.5 H27 L40.5,26 M4.5,26.5 H42" fill="none" stroke="#cacaca" stroke-width="1"/>
<path d="M42.5,27 V7.5 H103.5 L116.5,26" fill="#f5f5f5" stroke="#cacaca" stroke-width="1"/>
<rect x="42" y="5.5" width="62" height="2.2" fill="#1479ad"/>
</svg>
<div class="t" style="left:23.6px;top:411.94px;font-size:12px;color:#000;transform:scaleX(0.85);">File</div>
<div class="t" style="left:61.5px;top:411.24px;font-size:12px;color:#000;transform:scaleX(0.89);">Workspace</div>
<div class="t" style="left:29.5px;top:442.24px;font-size:12px;color:#000;transform:scaleX(0.85);">X:</div>
<div class="abs" style="left:46px;top:438px;width:141px;height:20px;border:1px solid #cdcdcd;border-radius:2.5px;background:#f6f6f6;overflow:hidden"><div class="abs" style="left:0;top:0;width:125px;height:18px;background:#fff;border-right:1px solid #cdcdcd"></div></div>
<svg class="abs" style="left:174.5px;top:443px" width="10" height="10"><path d="M2.1,3.1 L5,6.0 L7.9,3.1" fill="none" stroke="#6c6c6c" stroke-width="1.9"/></svg>
<div class="t" style="left:48.5px;top:442.04px;font-size:12px;color:#000;transform:scaleX(0.85);">data</div>
<div class="abs" style="left:193px;top:438px;width:61px;height:20px;border:1px solid #cdcdcd;border-radius:2.5px;background:#f6f6f6;overflow:hidden"><div class="abs" style="left:0;top:0;width:45px;height:18px;background:#fff;border-right:1px solid #cdcdcd"></div></div>
<svg class="abs" style="left:241.5px;top:443px" width="10" height="10"><path d="M2.1,3.1 L5,6.0 L7.9,3.1" fill="none" stroke="#6c6c6c" stroke-width="1.9"/></svg>
<div class="t" style="left:195.5px;top:442.04px;font-size:12px;color:#000;transform:scaleX(0.85);">1</div>
<div class="t" style="left:29.5px;top:467.74px;font-size:12px;color:#000;transform:scaleX(0.85);">Y:</div>
<div class="abs" style="left:46px;top:463.5px;width:141px;height:20px;border:1px solid #cdcdcd;border-radius:2.5px;background:#f6f6f6;overflow:hidden"><div class="abs" style="left:0;top:0;width:125px;height:18px;background:#fff;border-right:1px solid #cdcdcd"></div></div>
<svg class="abs" style="left:174.5px;top:468.5px" width="10" height="10"><path d="M2.1,3.1 L5,6.0 L7.9,3.1" fill="none" stroke="#6c6c6c" stroke-width="1.9"/></svg>
<div class="t" style="left:48.5px;top:467.54px;font-size:12px;color:#000;transform:scaleX(0.85);">data</div>
<div class="abs" style="left:193px;top:463.5px;width:61px;height:20px;border:1px solid #cdcdcd;border-radius:2.5px;background:#f6f6f6;overflow:hidden"><div class="abs" style="left:0;top:0;width:45px;height:18px;background:#fff;border-right:1px solid #cdcdcd"></div></div>
<svg class="abs" style="left:241.5px;top:468.5px" width="10" height="10"><path d="M2.1,3.1 L5,6.0 L7.9,3.1" fill="none" stroke="#6c6c6c" stroke-width="1.9"/></svg>
<div class="t" style="left:195.5px;top:467.54px;font-size:12px;color:#000;transform:scaleX(0.85);">2</div>
<div class="t" style="left:29.5px;top:493.24px;font-size:12px;color:#000;transform:scaleX(0.85);">Z:</div>
<div class="abs" style="left:46px;top:489px;width:141px;height:20px;border:1px solid #cdcdcd;border-radius:2.5px;background:#f6f6f6;overflow:hidden"><div class="abs" style="left:0;top:0;width:125px;height:18px;background:#f5f5f5;border-right:1px solid #cdcdcd"></div></div>
<svg class="abs" style="left:174.5px;top:494px" width="10" height="10"><path d="M2.1,3.1 L5,6.0 L7.9,3.1" fill="none" stroke="#d2d2d2" stroke-width="1.9"/></svg>
<div class="t" style="left:48.5px;top:493.04px;font-size:12px;color:#a0a0a0;transform:scaleX(0.85);">-</div>
<div class="abs" style="left:193px;top:489px;width:61px;height:20px;border:1px solid #cdcdcd;border-radius:2.5px;background:#f6f6f6;overflow:hidden"><div class="abs" style="left:0;top:0;width:45px;height:18px;background:#f5f5f5;border-right:1px solid #cdcdcd"></div></div>
<svg class="abs" style="left:241.5px;top:494px" width="10" height="10"><path d="M2.1,3.1 L5,6.0 L7.9,3.1" fill="none" stroke="#d2d2d2" stroke-width="1.9"/></svg>
<div class="abs" style="left:194.5px;top:517px;width:13px;height:13px;border:1px solid #b3b3bb;background:#fff;border-radius:1px"></div>
<div class="t" style="left:213.5px;top:518.04px;font-size:12px;color:#000;transform:scaleX(0.85);">Hold on</div>
<div class="abs" style="left:192px;top:725px;width:74px;height:24px;border:1px solid #b0b0b0;border-radius:3px;background:#f4f4f4"></div>
<svg class="abs" style="left:0;top:0" width="280" height="760"><g fill="#505050"><rect x="193" y="727" width="1" height="1"/><rect x="193" y="746" width="1" height="1"/><rect x="195" y="727" width="1" height="1"/><rect x="195" y="746" width="1" height="1"/><rect x="197" y="727" width="1" height="1"/><rect x="197" y="746" width="1" height="1"/><rect x="199" y="727" width="1" height="1"/><rect x="199" y="746" width="1" height="1"/><rect x="201" y="727" width="1" height="1"/><rect x="201" y="746" width="1" height="1"/><rect x="203" y="727" width="1" height="1"/><rect x="203" y="746" width="1" height="1"/><rect x="205" y="727" width="1" height="1"/><rect x="205" y="746" width="1" height="1"/><rect x="207" y="727" width="1" height="1"/><rect x="207" y="746" width="1" height="1"/><rect x="209" y="727" width="1" height="1"/><rect x="209" y="746" width="1" height="1"/><rect x="211" y="727" width="1" height="1"/><rect x="211" y="746" width="1" height="1"/><rect x="213" y="727" width="1" height="1"/><rect x="213" y="746" width="1" height="1"/><rect x="215" y="727" width="1" height="1"/><rect x="215" y="746" width="1" height="1"/><rect x="217" y="727" width="1" height="1"/><rect x="217" y="746" width="1" height="1"/><rect x="219" y="727" width="1" height="1"/><rect x="219" y="746" width="1" height="1"/><rect x="221" y="727" width="1" height="1"/><rect x="221" y="746" width="1" height="1"/><rect x="223" y="727" width="1" height="1"/><rect x="223" y="746" width="1" height="1"/><rect x="225" y="727" width="1" height="1"/><rect x="225" y="746" width="1" height="1"/><rect x="227" y="727" width="1" height="1"/><rect x="227" y="746" width="1" height="1"/><rect x="229" y="727" width="1" height="1"/><rect x="229" y="746" width="1" height="1"/><rect x="231" y="727" width="1" height="1"/><rect x="231" y="746" width="1" height="1"/><rect x="233" y="727" width="1" height="1"/><rect x="233" y="746" width="1" height="1"/><rect x="235" y="727" width="1" height="1"/><rect x="235" y="746" width="1" height="1"/><rect x="237" y="727" width="1" height="1"/><rect x="237" y="746" width="1" height="1"/><rect x="239" y="727" width="1" height="1"/><rect x="239" y="746" width="1" height="1"/><rect x="241" y="727" width="1" height="1"/><rect x="241" y="746" width="1" height="1"/><rect x="243" y="727" width="1" height="1"/><rect x="243" y="746" width="1" height="1"/><rect x="245" y="727" width="1" height="1"/><rect x="245" y="746" width="1" height="1"/><rect x="247" y="727" width="1" height="1"/><rect x="247" y="746" width="1" height="1"/><rect x="249" y="727" width="1" height="1"/><rect x="249" y="746" width="1" height="1"/><rect x="251" y="727" width="1" height="1"/><rect x="251" y="746" width="1" height="1"/><rect x="253" y="727" width="1" height="1"/><rect x="253" y="746" width="1" height="1"/><rect x="255" y="727" width="1" height="1"/><rect x="255" y="746" width="1" height="1"/><rect x="257" y="727" width="1" height="1"/><rect x="257" y="746" width="1" height="1"/><rect x="259" y="727" width="1" height="1"/><rect x="259" y="746" width="1" height="1"/><rect x="261" y="727" width="1" height="1"/><rect x="261" y="746" width="1" height="1"/><rect x="263" y="727" width="1" height="1"/><rect x="263" y="746" width="1" height="1"/><rect x="193" y="729" width="1" height="1"/><rect x="263" y="729" width="1" height="1"/><rect x="193" y="731" width="1" height="1"/><rect x="263" y="731" width="1" height="1"/><rect x="193" y="733" width="1" height="1"/><rect x="263" y="733" width="1" height="1"/><rect x="193" y="735" width="1" height="1"/><rect x="263" y="735" width="1" height="1"/><rect x="193" y="737" width="1" height="1"/><rect x="263" y="737" width="1" height="1"/><rect x="193" y="739" width="1" height="1"/><rect x="263" y="739" width="1" height="1"/><rect x="193" y="741" width="1" height="1"/><rect x="263" y="741" width="1" height="1"/><rect x="193" y="743" width="1" height="1"/><rect x="263" y="743" width="1" height="1"/><rect x="193" y="745" width="1" height="1"/><rect x="263" y="745" width="1" height="1"/></g></svg>
<div class="t" style="left:219.3px;top:730.54px;font-size:12px;color:#000;transform:scaleX(0.85);">Plot</div>
<div class="abs" style="left:281px;top:30px;width:803px;height:530px;background:#fff"></div>
<svg class="abs" style="left:0;top:0" width="1091" height="600">
<defs><linearGradient id="g28131h" x1="0" y1="0" x2="1" y2="0"><stop offset="0" stop-color="#2b93c0"/><stop offset="1" stop-color="#b3dbeb"/></linearGradient><linearGradient id="g28131v" x1="0" y1="0" x2="0" y2="1"><stop offset="0" stop-color="#2b93c0"/><stop offset="1" stop-color="#b3dbeb"/></linearGradient></defs>
<rect x="281.2" y="31.1" width="21" height="1.7" fill="url(#g28131h)"/>
<rect x="281.2" y="31.1" width="1.7" height="21" fill="url(#g28131v)"/>
<defs><linearGradient id="g108331h" x1="1" y1="0" x2="0" y2="0"><stop offset="0" stop-color="#2b93c0"/><stop offset="1" stop-color="#b3dbeb"/></linearGradient><linearGradient id="g108331v" x1="0" y1="0" x2="0" y2="1"><stop offset="0" stop-color="#2b93c0"/><stop offset="1" stop-color="#b3dbeb"/></linearGradient></defs>
<rect x="1062.1" y="31.1" width="21" height="1.7" fill="url(#g108331h)"/>
<rect x="1081.3999999999999" y="31.1" width="1.7" height="21" fill="url(#g108331v)"/>
<defs><linearGradient id="g281559h" x1="0" y1="0" x2="1" y2="0"><stop offset="0" stop-color="#2b93c0"/><stop offset="1" stop-color="#b3dbeb"/></linearGradient><linearGradient id="g281559v" x1="0" y1="1" x2="0" y2="0"><stop offset="0" stop-color="#2b93c0"/><stop offset="1" stop-color="#b3dbeb"/></linearGradient></defs>
<rect x="281.2" y="558.0" width="21" height="1.7" fill="url(#g281559h)"/>
<rect x="281.2" y="538.7" width="1.7" height="21" fill="url(#g281559v)"/>
<defs><linearGradient id="g1083559h" x1="1" y1="0" x2="0" y2="0"><stop offset="0" stop-color="#2b93c0"/><stop offset="1" stop-color="#b3dbeb"/></linearGradient><linearGradient id="g1083559v" x1="0" y1="1" x2="0" y2="0"><stop offset="0" stop-color="#2b93c0"/><stop offset="1" stop-color="#b3dbeb"/></linearGradient></defs>
<rect x="1062.1" y="558.0" width="21" height="1.7" fill="url(#g1083559h)"/>
<rect x="1081.3999999999999" y="538.7" width="1.7" height="21" fill="url(#g1083559v)"/>
<line x1="324.8" y1="526.5" x2="324.8" y2="43" stroke="#a2a2a2" stroke-width="1.6"/>
<line x1="324" y1="43.5" x2="1073.5" y2="43.5" stroke="#8c8c8c" stroke-width="1"/>
<path d="M324.5,526.5 H1073.5 V43.5" fill="none" stroke="#000" stroke-width="1"/>
<line x1="324" y1="285.5" x2="1073" y2="285.5" stroke="#000" stroke-width="1"/>
<line x1="320" y1="43.5" x2="324" y2="43.5" stroke="#000" stroke-width="1"/>
<line x1="320" y1="91.8" x2="324" y2="91.8" stroke="#000" stroke-width="1"/>
<line x1="320" y1="140.1" x2="324" y2="140.1" stroke="#000" stroke-width="1"/>
<line x1="320" y1="188.4" x2="324" y2="188.4" stroke="#000" stroke-width="1"/>
<line x1="320" y1="236.7" x2="324" y2="236.7" stroke="#000" stroke-width="1"/>
<line x1="320" y1="285.0" x2="324" y2="285.0" stroke="#000" stroke-width="1"/>
<line x1="320" y1="333.3" x2="324" y2="333.3" stroke="#000" stroke-width="1"/>
<line x1="320" y1="381.6" x2="324" y2="381.6" stroke="#000" stroke-width="1"/>
<line x1="320" y1="429.9" x2="324" y2="429.9" stroke="#000" stroke-width="1"/>
<line x1="320" y1="478.2" x2="324" y2="478.2" stroke="#000" stroke-width="1"/>
<line x1="320" y1="526.5" x2="324" y2="526.5" stroke="#000" stroke-width="1"/>
<line x1="324.5" y1="526" x2="324.5" y2="531" stroke="#000" stroke-width="1"/>
<line x1="399.5" y1="526" x2="399.5" y2="531" stroke="#000" stroke-width="1"/>
<line x1="474.5" y1="526" x2="474.5" y2="531" stroke="#000" stroke-width="1"/>
<line x1="549.5" y1="526" x2="549.5" y2="531" stroke="#000" stroke-width="1"/>
<line x1="624.5" y1="526" x2="624.5" y2="531" stroke="#000" stroke-width="1"/>
<line x1="698.5" y1="526" x2="698.5" y2="531" stroke="#000" stroke-width="1"/>
<line x1="773.5" y1="526" x2="773.5" y2="531" stroke="#000" stroke-width="1"/>
<line x1="848.5" y1="526" x2="848.5" y2="531" stroke="#000" stroke-width="1"/>
<line x1="923.5" y1="526" x2="923.5" y2="531" stroke="#000" stroke-width="1"/>
<line x1="998.5" y1="526" x2="998.5" y2="531" stroke="#000" stroke-width="1"/>
<line x1="1073.5" y1="526" x2="1073.5" y2="531" stroke="#000" stroke-width="1"/>
<g font-family="Liberation Sans" font-size="10.5" fill="#000"><text transform="translate(320.3 47.3) scale(0.9 1)" text-anchor="end">1.0</text><text transform="translate(320.3 95.6) scale(0.9 1)" text-anchor="end">0.8</text><text transform="translate(320.3 143.9) scale(0.9 1)" text-anchor="end">0.6</text><text transform="translate(320.3 192.2) scale(0.9 1)" text-anchor="end">0.4</text><text transform="translate(320.3 240.5) scale(0.9 1)" text-anchor="end">0.2</text><text transform="translate(320.3 288.8) scale(0.9 1)" text-anchor="end">0.0</text><text transform="translate(320.3 337.1) scale(0.9 1)" text-anchor="end">-0.2</text><text transform="translate(320.3 385.4) scale(0.9 1)" text-anchor="end">-0.4</text><text transform="translate(320.3 433.7) scale(0.9 1)" text-anchor="end">-0.6</text><text transform="translate(320.3 482.0) scale(0.9 1)" text-anchor="end">-0.8</text><text transform="translate(320.3 530.3) scale(0.9 1)" text-anchor="end">-1.0</text><text transform="translate(324.5 539.2) scale(0.9 1)" text-anchor="middle">0.0</text><text transform="translate(399.4 539.2) scale(0.9 1)" text-anchor="middle">0.5</text><text transform="translate(474.3 539.2) scale(0.9 1)" text-anchor="middle">1.0</text><text transform="translate(549.2 539.2) scale(0.9 1)" text-anchor="middle">1.5</text><text transform="translate(624.1 539.2) scale(0.9 1)" text-anchor="middle">2.0</text><text transform="translate(699.0 539.2) scale(0.9 1)" text-anchor="middle">2.5</text><text transform="translate(773.9 539.2) scale(0.9 1)" text-anchor="middle">3.0</text><text transform="translate(848.8 539.2) scale(0.9 1)" text-anchor="middle">3.5</text><text transform="translate(923.7 539.2) scale(0.9 1)" text-anchor="middle">4.0</text><text transform="translate(998.6 539.2) scale(0.9 1)" text-anchor="middle">4.5</text><text transform="translate(1073.5 539.2) scale(0.9 1)" text-anchor="middle">5.0</text></g>
<polyline points="324.00,43.00 331.49,44.21 338.98,47.81 346.47,53.79 353.96,62.06 361.45,72.56 368.94,85.18 376.43,99.79 383.92,116.25 391.41,134.38 398.90,154.02 406.39,174.96 413.88,196.99 421.37,219.90 428.86,243.45 436.35,267.42 443.84,291.55 451.33,315.62 458.82,339.37 466.31,362.57 473.80,385.00 481.29,406.42 488.78,426.62 496.27,445.41 503.76,462.58 511.25,477.98 518.74,491.44 526.23,502.83 533.72,512.05 541.21,518.99 548.70,523.58 556.19,525.79 563.68,525.59 571.17,522.98 578.66,517.98 586.15,510.65 593.64,501.07 601.13,489.32 608.62,475.52 616.11,459.81 623.60,442.35 631.09,423.32 638.58,402.90 646.07,381.29 653.56,358.72 661.05,335.41 668.54,311.58 676.03,287.49 683.52,263.37 691.01,239.46 698.50,216.00 705.99,193.22 713.48,171.35 720.97,150.62 728.46,131.22 735.95,113.36 743.44,97.20 750.93,82.92 758.42,70.65 765.91,60.51 773.40,52.62 780.89,47.04 788.38,43.84 795.87,43.03 803.36,44.65 810.85,48.65 818.34,55.02 825.83,63.68 833.32,74.54 840.81,87.50 848.30,102.43 855.79,119.18 863.28,137.58 870.77,157.45 878.26,178.59 885.75,200.79 893.24,223.82 900.73,247.46 908.22,271.47 915.71,295.61 923.20,319.64 930.69,343.32 938.18,366.41 945.67,388.68 953.16,409.91 960.65,429.89 968.14,448.41 975.63,465.30 983.12,480.38 990.61,493.50 998.10,504.54 1005.59,513.37 1013.08,519.92 1020.57,524.12 1028.06,525.93 1035.55,525.32 1043.04,522.30 1050.53,516.91 1058.02,509.20 1065.51,499.24 1073.00,487.14" fill="none" stroke="#0000ff" stroke-width="2.0" stroke-linejoin="round"/>
</svg>
<div class="t" style="left:281px;top:565.94px;font-size:12px;color:#000;transform:scaleX(0.85);">Plot commands:</div>
<div class="abs" style="left:281px;top:583px;width:801px;height:174px;background:#fefefe"></div>
<div class="abs" style="left:320px;top:585px;font-family:'Liberation Mono',monospace;font-size:13.2px;letter-spacing:0;line-height:17.5px;white-space:pre;color:#222">1
2
3</div>
<div class="abs" style="left:349px;top:585px;font-family:'Liberation Mono',monospace;font-size:13.2px;letter-spacing:0;line-height:17.5px;white-space:pre;color:#222">hl = <span style="color:#ff00ff">plot</span>(data(:, 1),data(:, 2));</div>
<div class="abs" style="left:929px;top:763px;width:75px;height:23px;border:1px solid #b0b0b0;border-radius:2px;background:#f4f4f4"></div>
<div class="t" style="left:943.3px;top:768.14px;font-size:12px;color:#000;transform:scaleX(0.85);">Clear Plot</div>
<div class="abs" style="left:1009px;top:763px;width:74px;height:23px;border:1px solid #b0b0b0;border-radius:2px;background:#f4f4f4"></div>
<div class="t" style="left:1031px;top:768.14px;font-size:12px;color:#000;transform:scaleX(0.85);">Reset</div>
</body></html>
